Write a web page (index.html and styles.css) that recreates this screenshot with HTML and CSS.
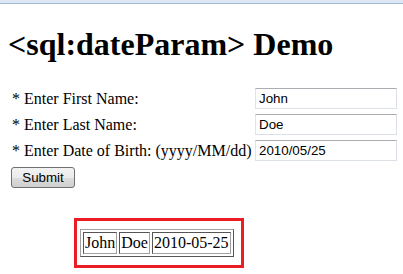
FILE: index.html
```html
<!DOCTYPE html>
<html lang="en">

<head>
	<meta charset="UTF-8">
	<meta name="viewport" content="width=device-width, initial-scale=1.0">
	<title>sql:dateParam Demo</title>
	<link rel="stylesheet" href="styles.css">
</head>

<body>
	<div class="chrome-strip"></div>
	<div class="page">
		<h1 class="page-title">&lt;sql:dateParam&gt; Demo</h1>
		<form class="entry-form">
			<label for="fname">* Enter First Name:</label>
			<input class="text-input" type="text" id="fname" value="John">
			<label for="lname">* Enter Last Name:</label>
			<input class="text-input" type="text" id="lname" value="Doe">
			<label for="dob">* Enter Date of Birth: (yyyy/MM/dd)</label>
			<input class="text-input" type="text" id="dob" value="2010/05/25">
		</form>
		<button class="submit-button" type="button">Submit</button>
		<div class="result-box">
			<table class="result-table">
				<tr>
					<td>John</td>
					<td>Doe</td>
					<td>2010-05-25</td>
				</tr>
			</table>
		</div>
	</div>
</body>

</html>
```

FILE: styles.css
```css
* {
	margin: 0;
	padding: 0;
	box-sizing: border-box;
}

body {
	font-family: "Liberation Serif", "Times New Roman", serif;
	font-size: 16px;
	color: #000;
	background: #fff;
}

.chrome-strip {
	height: 4px;
	background: #dde7f4;
	border-bottom: 1px solid #a7bad2;
}

.page {
	padding: 0 8px;
}

.page-title {
	margin-top: 22px;
	font-size: 32px;
	font-weight: bold;
	line-height: 37px;
}

.entry-form {
	display: grid;
	grid-template-columns: 243px 142px;
	grid-auto-rows: 21px;
	row-gap: 5px;
	align-items: center;
	margin: 25px 0 0 4px;
}

.entry-form label {
	white-space: nowrap;
}

.text-input {
	width: 142px;
	height: 21px;
	padding: 0 3px;
	font-family: "Liberation Sans", Arial, sans-serif;
	font-size: 13.33px;
	color: #000;
	border: 1px solid #dbdfe6;
	border-top-color: #abadb3;
	border-left-color: #e2e3ea;
	background: #fff;
}

.submit-button {
	display: block;
	margin: 6px 0 0 3px;
	width: 64px;
	height: 21px;
	font-family: "Liberation Sans", Arial, sans-serif;
	font-size: 13.33px;
	color: #000;
	border: 1px solid #707070;
	border-radius: 3px;
	background: linear-gradient(#f2f2f2 0%, #ebebeb 50%, #dddddd 51%, #cfcfcf 100%);
}

.result-box {
	width: 170px;
	height: 50px;
	margin: 30px 0 0 66px;
	padding: 8px 0 0 3px;
	border: 3px solid #ec1c24;
}

.result-table {
	border: 1px solid;
	border-color: #a0a0a0 #555 #555 #a0a0a0;
	border-spacing: 2px;
}

.result-table td {
	padding: 1px;
	line-height: 18px;
	border: 1px solid;
	border-color: #555 #a0a0a0 #a0a0a0 #555;
}
```
